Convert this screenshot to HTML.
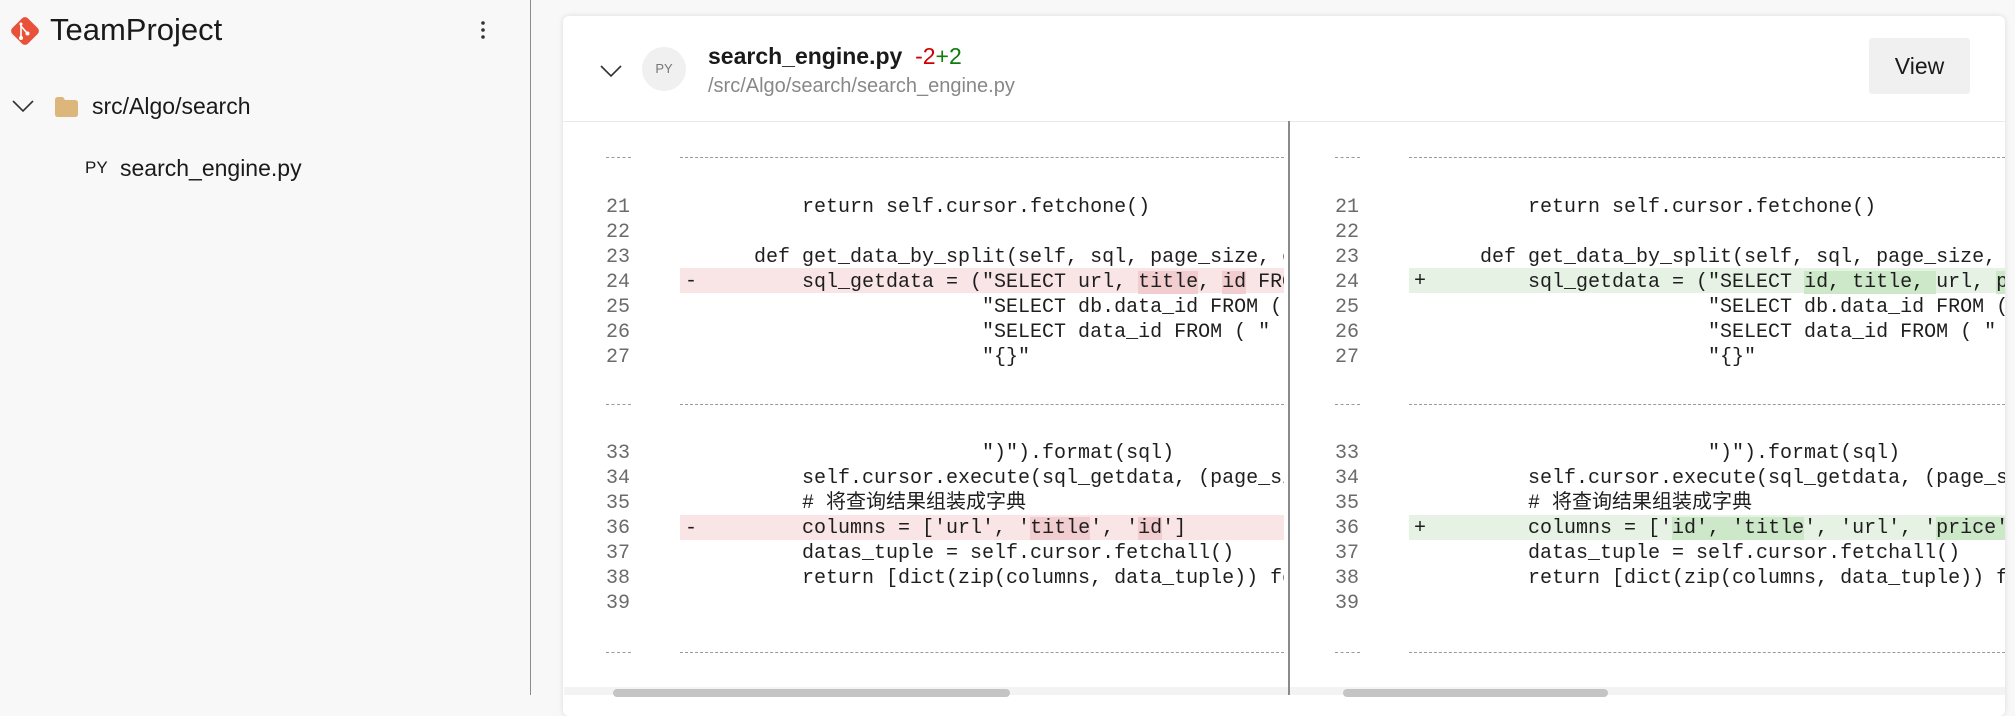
<!DOCTYPE html>
<html><head><meta charset="utf-8"><style>
*{margin:0;padding:0;box-sizing:border-box}
body{width:2015px;height:695px;overflow:hidden;background:#f8f8f8;font-family:"Liberation Sans","Noto Sans CJK SC",sans-serif;position:relative;color:#222}
.abs{position:absolute;white-space:pre}
#side{position:absolute;left:0;top:0;width:531px;height:695px;border-right:1px solid #8c8c8c;background:#f8f8f8}
#card{position:absolute;left:563px;top:16px;width:1442px;height:700px;background:#fff;border-radius:6px;box-shadow:0 0 6px rgba(0,0,0,.12)}
.mono{font-family:"Liberation Mono","Noto Sans CJK SC",monospace;font-size:20px;color:#1e1e1e}
.ln{color:#6b6b6b;font-family:"Liberation Mono",monospace;font-size:20px}
.dash{position:absolute;height:0;border-top:1px dashed #9a9a9a}
.row{position:absolute;height:25px}
.clip{position:absolute;overflow:hidden;top:0;height:695px}
.r{background:#f9e5e6}.rd{background:#f2cdd0}
.g{background:#e6f3e4}.gd{background:#cde7c9}
</style></head><body>
<div id="side">
  <svg class="abs" style="left:8px;top:14px" width="34" height="34" viewBox="0 0 34 34">
    <rect x="6" y="6" width="22" height="22" rx="4" fill="#e8523a" transform="rotate(45 17 17)"/>
    <path d="M13 9v14M13 12l6 7" stroke="#fff" stroke-width="1.6" fill="none"/>
    <circle cx="13" cy="24" r="2" fill="#fff"/><circle cx="19.5" cy="19.5" r="2" fill="#fff"/><circle cx="13" cy="10" r="1.5" fill="#fff"/>
  </svg>
  <div class="abs" style="left:50px;top:12px;font-size:31px;color:#1a1a1a">TeamProject</div>
  <svg class="abs" style="left:479px;top:20px" width="8" height="22"><circle cx="4" cy="3" r="1.8" fill="#333"/><circle cx="4" cy="10" r="1.8" fill="#333"/><circle cx="4" cy="17" r="1.8" fill="#333"/></svg>
  <svg class="abs" style="left:12px;top:99px" width="22" height="14"><path d="M1 2l10 10L21 2" stroke="#333" stroke-width="1.6" fill="none"/></svg>
  <svg class="abs" style="left:55px;top:97px" width="23" height="20"><path d="M0 3q0-3 3-3h5l2 3h10q3 0 3 3v11q0 3-3 3H3q-3 0-3-3z" fill="#dcb67a"/></svg>
  <div class="abs" style="left:92px;top:93px;font-size:23px;color:#1a1a1a">src/Algo/search</div>
  <div class="abs" style="left:85px;top:158px;font-size:17px;color:#1a1a1a">PY</div>
  <div class="abs" style="left:120px;top:155px;font-size:23px;color:#1a1a1a">search_engine.py</div>
</div>

<div id="card">
  <svg class="abs" style="left:37px;top:48px" width="22" height="14"><path d="M1 2l10 10L21 2" stroke="#333" stroke-width="1.6" fill="none"/></svg>
  <div class="abs" style="left:79px;top:31px;width:44px;height:44px;border-radius:50%;background:#f0f0f0;color:#777;font-size:13px;text-align:center;line-height:44px">PY</div>
  <div class="abs" style="left:145px;top:27px;font-size:23px;font-weight:bold;color:#1a1a1a">search_engine.py <span style="font-weight:normal;color:#cc0000">&nbsp;-2</span><span style="font-weight:normal;color:#107c10">+2</span></div>
  <div class="abs" style="left:145px;top:59px;font-size:20px;color:#888">/src/Algo/search/search_engine.py</div>
  <div class="abs" style="left:1306px;top:22px;width:101px;height:56px;background:#f0f0f0;border-radius:3px;font-size:23px;line-height:56px;text-align:center;color:#1a1a1a">View</div>
  <div style="position:absolute;left:0;top:105px;width:1442px;border-top:1px solid #e8e8e8"></div>
</div>

<div style="position:absolute;left:1288px;top:121px;width:2px;height:574px;background:#8a8a8a"></div>

<!-- LEFT pane -->
<div class="dash" style="left:606px;top:157px;width:25px"></div>
<div class="dash" style="left:680px;top:157px;width:604px"></div>
<div class="dash" style="left:606px;top:404px;width:25px"></div>
<div class="dash" style="left:680px;top:404px;width:604px"></div>
<div class="dash" style="left:606px;top:652px;width:25px"></div>
<div class="dash" style="left:680px;top:652px;width:604px"></div>
<div class="clip" style="left:680px;width:604px">
  <div class="row r" style="left:0;top:268px;width:604px"></div>
  <div class="row r" style="left:0;top:515px;width:604px"></div>
  <div class="abs mono" style="left:5px;top:270px">-</div>
  <div class="abs mono" style="left:5px;top:517px">-</div>
  <div class="abs mono" style="left:26px;top:195px;line-height:25px">        return self.cursor.fetchone()

    def get_data_by_split(self, sql, page_size, offset):
        sql_getdata = ("SELECT url, <span class="rd">title</span>, <span class="rd">id</span> FROM data WHERE id IN ( "
                       "SELECT db.data_id FROM ( "
                       "SELECT data_id FROM ( "
                       "{}"</div>
  <div class="abs mono" style="left:26px;top:441px;line-height:25px">                       ")").format(sql)
        self.cursor.execute(sql_getdata, (page_size, offset))
        # 将查询结果组装成字典
        columns = ['url', '<span class="rd">title</span>', '<span class="rd">id</span>']
        datas_tuple = self.cursor.fetchall()
        return [dict(zip(columns, data_tuple)) for data_tuple in datas_tuple]</div>
</div>
<div class="abs ln" style="left:606px;top:195px;line-height:25px">21
22
23
24
25
26
27</div>
<div class="abs ln" style="left:606px;top:441px;line-height:25px">33
34
35
36
37
38
39</div>

<!-- RIGHT pane -->
<div class="dash" style="left:1335px;top:157px;width:25px"></div>
<div class="dash" style="left:1409px;top:157px;width:596px"></div>
<div class="dash" style="left:1335px;top:404px;width:25px"></div>
<div class="dash" style="left:1409px;top:404px;width:596px"></div>
<div class="dash" style="left:1335px;top:652px;width:25px"></div>
<div class="dash" style="left:1409px;top:652px;width:596px"></div>
<div class="clip" style="left:1409px;width:596px">
  <div class="row g" style="left:0;top:268px;width:596px"></div>
  <div class="row g" style="left:0;top:515px;width:596px"></div>
  <div class="abs mono" style="left:5px;top:270px">+</div>
  <div class="abs mono" style="left:5px;top:517px">+</div>
  <div class="abs mono" style="left:23px;top:195px;line-height:25px">        return self.cursor.fetchone()

    def get_data_by_split(self, sql, page_size, offset):
        sql_getdata = ("SELECT <span class="gd">id, title, </span>url, <span class="gd">price</span> FROM data WHERE id IN ( "
                       "SELECT db.data_id FROM ( "
                       "SELECT data_id FROM ( "
                       "{}"</div>
  <div class="abs mono" style="left:23px;top:441px;line-height:25px">                       ")").format(sql)
        self.cursor.execute(sql_getdata, (page_size, offset))
        # 将查询结果组装成字典
        columns = ['<span class="gd">id', 'title</span>', 'url', '<span class="gd">price'</span>]
        datas_tuple = self.cursor.fetchall()
        return [dict(zip(columns, data_tuple)) for data_tuple in datas_tuple]</div>
</div>
<div class="abs ln" style="left:1335px;top:195px;line-height:25px">21
22
23
24
25
26
27</div>
<div class="abs ln" style="left:1335px;top:441px;line-height:25px">33
34
35
36
37
38
39</div>

<!-- scrollbars -->
<div style="position:absolute;left:564px;top:687px;width:724px;height:8px;background:#f3f3f3"></div>
<div style="position:absolute;left:613px;top:689px;width:397px;height:8px;background:#c4c4c4;border-radius:4px"></div>
<div style="position:absolute;left:1290px;top:687px;width:715px;height:8px;background:#f3f3f3"></div>
<div style="position:absolute;left:1343px;top:689px;width:265px;height:8px;background:#c4c4c4;border-radius:4px"></div>
</body></html>
